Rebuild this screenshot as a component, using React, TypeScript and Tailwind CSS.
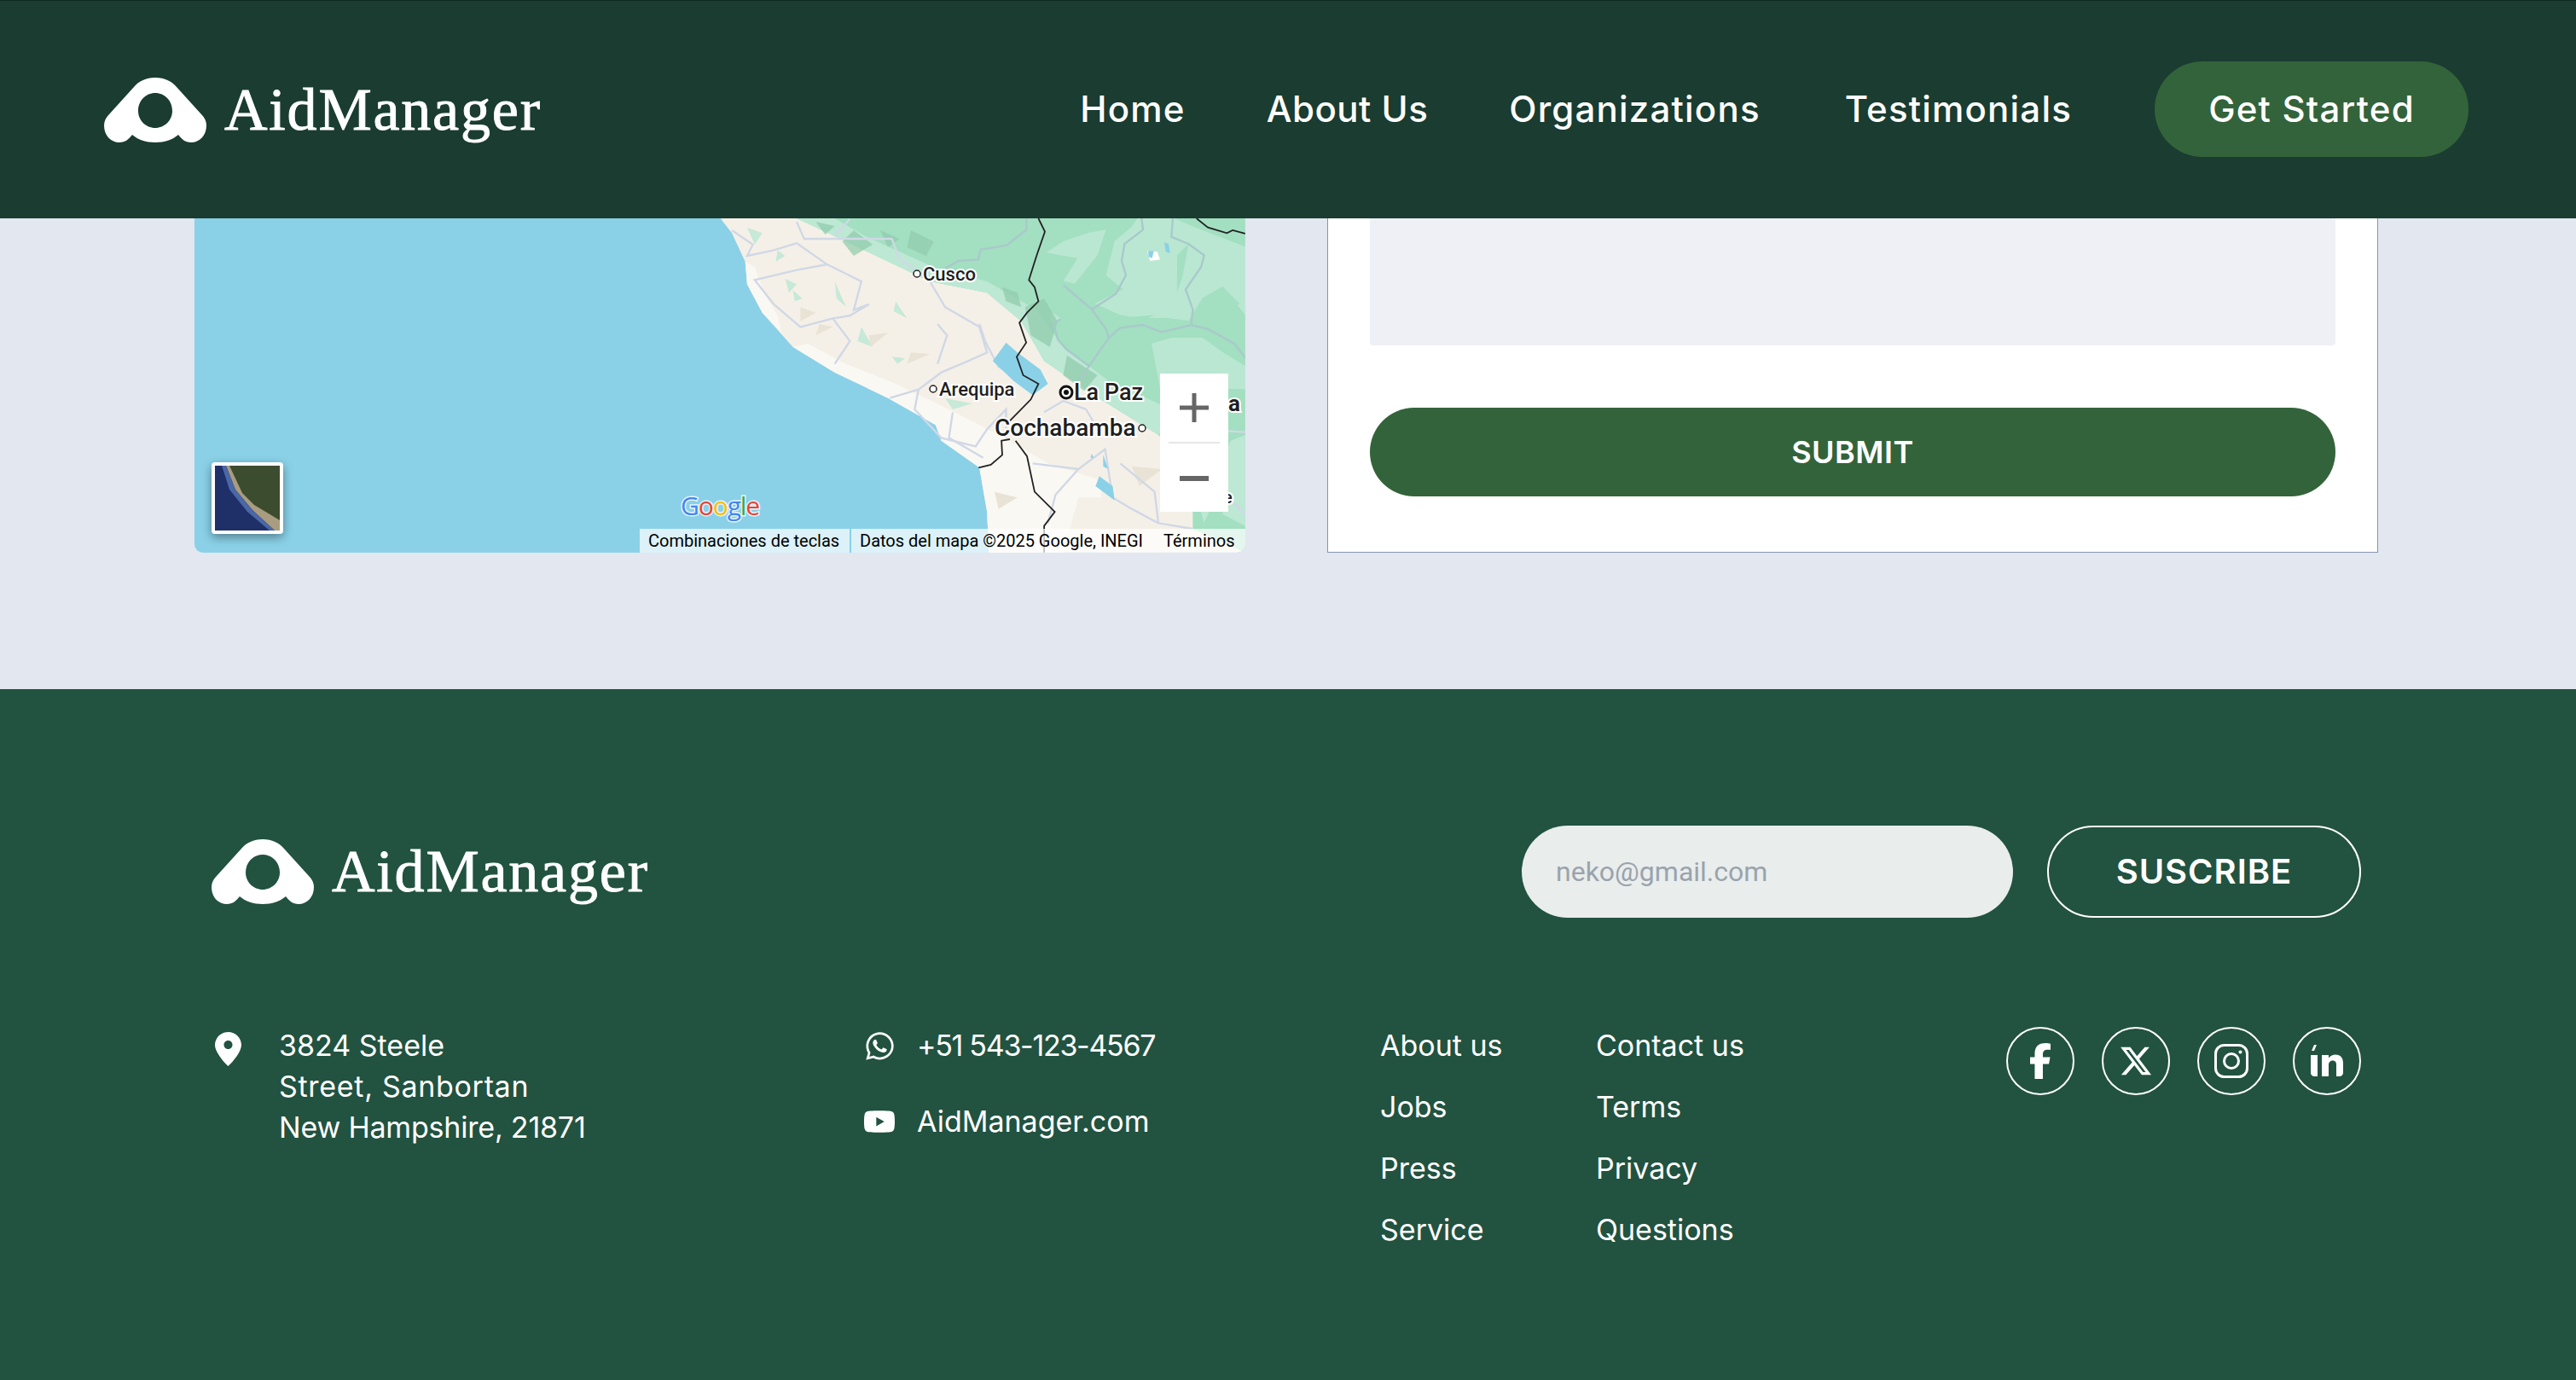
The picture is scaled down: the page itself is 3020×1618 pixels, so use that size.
import { FaFacebookF, FaWhatsapp, FaXTwitter, FaYoutube } from "react-icons/fa6";

// map shapes were traced from two zoomed crops, so two converters to page coordinates
const pts = (list: number[][]) =>
  list.map(([x, y]) => `${800 + x / 2.24},${250 + y / 3}`).join(" ");
const ne = (list: number[][]) =>
  list.map(([x, y]) => `${1100 + x / 3},${256 + y / 3}`).join(" ");

const LAND = [[100, 18], [130, 70], [165, 170], [170, 250], [210, 350], [290, 470], [400, 560], [540, 650], [665, 745], [680, 800], [780, 895], [800, 1050], [805, 1193], [1478, 1193], [1478, 18]];
const COAST_WHITE = [[290, 470], [400, 560], [540, 650], [665, 745], [680, 800], [780, 895], [800, 1050], [805, 1193], [1000, 1193], [1040, 1000], [1250, 1000], [1250, 1100], [1340, 1100], [1300, 980], [1100, 940], [960, 880], [860, 800], [700, 690], [560, 600], [430, 530], [330, 460]];
const COAST_NORTH = [[165, 170], [170, 250], [210, 350], [260, 420], [250, 360], [215, 280], [190, 190]];
const GREEN_BASE = [[300, 18], [430, 100], [650, 240], [800, 280], [890, 380], [950, 520], [1080, 640], [1250, 780], [1340, 900], [1340, 1110], [1478, 1193], [1478, 18]];
const GREEN_BAND = [[300, 18], [430, 100], [650, 240], [800, 280], [890, 380], [950, 520], [1080, 640], [1250, 780], [1300, 700], [1120, 590], [1000, 470], [930, 340], [800, 240], [660, 190], [480, 80], [400, 18]];
const BEIGE_SOUTH = [[1340, 900], [1340, 1110], [1250, 1193], [1100, 1193], [1100, 900], [1250, 790]];
const NE_LIGHT = [
  [[590, 200], [620, 80], [680, 30], [700, 0], [830, 0], [900, 30], [1080, 100], [1080, 340], [1000, 240], [930, 280], [880, 360], [800, 350], [700, 350], [640, 340], [550, 300], [650, 250]],
  [[380, 120], [440, 80], [530, 50], [590, 40], [560, 130], [480, 230], [440, 220], [490, 140], [430, 130]],
  [[750, 440], [820, 420], [930, 420], [1000, 470], [1080, 520], [1080, 600], [780, 600]],
  [[400, 330], [430, 350], [410, 370], [390, 360]],
];
const NE_DARK = [
  [[940, 280], [1000, 240], [1060, 300], [1000, 340]],
  [[840, 130], [880, 90], [860, 200], [840, 260]],
  [[640, 350], [760, 340], [700, 370]],
];
const SOUTH_GREEN = [
  [[1440, 800], [1478, 780], [1478, 1100], [1420, 1060], [1400, 930]],
  [[1340, 950], [1400, 1000], [1370, 1090]],
];
const SHADES = [
  [[900, 330], [950, 300], [985, 380], [965, 470], [915, 430]],
  [[1010, 500], [1090, 570], [1055, 625], [1000, 570]],
  [[600, 60], [660, 100], [640, 150], [590, 120]],
  [[450, 60], [500, 110], [450, 150], [420, 100]],
  [[840, 260], [880, 280], [890, 330], [850, 310]],
  [[520, 60], [570, 90], [540, 120]],
  [[350, 30], [400, 45], [375, 75]],
];
const SPECKS = [
  [[270, 230], [300, 250], [280, 280]],
  [[400, 240], [430, 330], [405, 300]],
  [[560, 310], [590, 370], [555, 345]],
  [[470, 400], [500, 470], [460, 450]],
  [[550, 505], [585, 510], [565, 530]],
  [[690, 650], [760, 670], [710, 690]],
  [[290, 270], [315, 300], [295, 310]],
  [[170, 50], [210, 70], [190, 110]],
  [[250, 130], [270, 150], [245, 170]],
];
const TAN = [
  [[360, 390], [395, 400], [350, 430]],
  [[600, 490], [650, 495], [590, 530]],
  [[490, 430], [540, 420], [495, 470]],
  [[310, 330], [350, 350], [310, 380]],
  [[820, 980], [880, 1000], [830, 1040]],
  [[1180, 890], [1260, 900], [1200, 960]],
];
const ROADS = [
  [[130, 60], [185, 110], [170, 150], [240, 130], [300, 105], [380, 180], [300, 200], [190, 235], [240, 320], [310, 400], [395, 370], [440, 450], [400, 530]],
  [[380, 180], [470, 240], [450, 340], [490, 320], [440, 360], [395, 370]],
  [[300, 30], [320, 90], [430, 90], [550, 90], [570, 160], [650, 240], [690, 330], [780, 400], [800, 490], [750, 520], [680, 560], [620, 620], [545, 650]],
  [[670, 390], [695, 430], [670, 530]],
  [[780, 390], [795, 450], [830, 540], [910, 600]],
  [[620, 620], [610, 690], [680, 790], [770, 820], [800, 760], [850, 690], [850, 790]],
  [[710, 700], [700, 790], [790, 860]],
  [[920, 880], [1040, 900], [1110, 830], [1130, 1000], [1180, 1040], [1250, 1090]],
  [[1040, 900], [980, 990], [960, 1090]],
  [[1150, 880], [1240, 980], [1250, 1090], [1340, 1110]],
  [[950, 700], [1000, 660], [1060, 690], [1100, 780]],
  [[1350, 760], [1478, 770]],
  [[1400, 950], [1478, 1060]],
  [[400, 80], [440, 20]],
];
const NE_ROADS = [
  [[310, 0], [310, 40], [240, 95], [150, 110], [140, 145], [70, 150], [0, 190]],
  [[715, 0], [720, 40], [655, 90], [645, 150], [660, 200], [625, 265], [540, 320], [440, 235]],
  [[540, 320], [590, 390], [600, 420], [530, 520], [500, 570]],
  [[600, 420], [640, 385], [720, 375], [785, 400], [890, 375], [950, 390], [1040, 440], [1080, 490]],
  [[825, 0], [820, 65], [880, 90], [935, 130], [925, 170], [870, 250], [895, 320], [890, 375]],
  [[430, 355], [405, 370], [420, 425], [450, 460], [530, 520]],
];
const BORDERS = [
  [[935, 18], [952, 65], [930, 150], [910, 235], [925, 260], [935, 310], [905, 350], [885, 385], [903, 455], [878, 505], [895, 570], [935, 600], [915, 655], [860, 730]],
  [[860, 795], [838, 800], [840, 850], [810, 885], [778, 895]],
  [[875, 800], [905, 855], [925, 980], [978, 1050], [950, 1100], [950, 1193]],
  [[1350, 18], [1380, 50], [1430, 70], [1445, 60], [1478, 72]],
];
const LAKES = [
  [[850, 455], [815, 520], [870, 590], [920, 640], [960, 600], [940, 550], [880, 490]],
  [[1095, 925], [1130, 960], [1135, 1010], [1085, 960]],
  [[1105, 850], [1118, 900], [1105, 890]],
  [[1075, 845], [1080, 860], [1072, 860]],
];

const FOOTER_LINKS = [
  ["About us", "Contact us"],
  ["Jobs", "Terms"],
  ["Press", "Privacy"],
  ["Service", "Questions"],
];

function LogoMark() {
  return (
    <svg className="h-[76px] w-[120px] shrink-0" viewBox="0 0 120 76">
      <path
        fill="#fff"
        fillRule="evenodd"
        d="M60 0C71 0 79 4 85 11L114 43C118 47 120 51 120 56C120 68 112 76 102 76C95 76 91 72 87 67C80 73 71 76 60 76C49 76 40 73 33 67C29 72 25 76 18 76C8 76 0 68 0 56C0 51 2 47 6 43L35 11C41 4 49 0 60 0ZM60 18C49 18 40 27 40 39C40 50 49 59 60 59C71 59 80 50 80 39C80 27 71 18 60 18Z"
      />
    </svg>
  );
}

function Logo() {
  return (
    <div className="flex items-center gap-[21px]">
      <LogoMark />
      <span className="font-['Liberation_Serif',serif] text-[70px] leading-[76px] tracking-[1.8px] text-white [-webkit-text-stroke:0.9px_white]">
        AidManager
      </span>
    </div>
  );
}

function MapLabel({ x, y, size, weight = 500, children }: { x: number; y: number; size: number; weight?: number; children: string }) {
  return (
    <text
      x={x}
      y={y}
      fontFamily="Roboto, sans-serif"
      fontSize={size}
      fontWeight={weight}
      fill="#1f1f1f"
      stroke="#fff"
      strokeWidth={4}
      paintOrder="stroke"
    >
      {children}
    </text>
  );
}

function MapDot({ x, y, big }: { x: number; y: number; big?: boolean }) {
  return big ? (
    <g>
      <circle cx={x} cy={y} r={7} fill="#fff" stroke="#111" strokeWidth={3} />
      <circle cx={x} cy={y} r={3} fill="#111" />
    </g>
  ) : (
    <circle cx={x} cy={y} r={4} fill="#fff" stroke="#222" strokeWidth={1.5} />
  );
}

function MapPanel() {
  return (
    <div className="relative h-[392px] w-[1232px] shrink-0 overflow-hidden rounded-b-[10px] bg-[#8ad1e8]">
      <svg className="block h-full w-full" viewBox="228 256 1232 392">
        <polygon points={pts(LAND)} fill="#f5f0e7" />
        <polygon points={pts(COAST_WHITE)} fill="#faf8f3" />
        <polygon points={pts(COAST_NORTH)} fill="#faf8f3" />
        <polygon points={pts(GREEN_BASE)} fill="#a3dfc1" />
        <polygon points={pts(BEIGE_SOUTH)} fill="#f5f0e7" />
        {SOUTH_GREEN.map((p, i) => (
          <polygon key={i} points={pts(p)} fill="#bde8d4" />
        ))}
        <polygon points={pts(GREEN_BAND)} fill="#bde8d4" />
        {NE_LIGHT.map((p, i) => (
          <polygon key={i} points={ne(p)} fill="#bfe9d6" fillOpacity={0.8} />
        ))}
        {NE_DARK.map((p, i) => (
          <polygon key={i} points={ne(p)} fill="#a3dfc1" />
        ))}
        {SHADES.map((p, i) => (
          <polygon key={i} points={pts(p)} fill="#8fcbab" fillOpacity={0.7} />
        ))}
        {SPECKS.map((p, i) => (
          <polygon key={i} points={pts(p)} fill="#c6e9d8" />
        ))}
        {TAN.map((p, i) => (
          <polygon key={i} points={pts(p)} fill="#e9e3d6" />
        ))}
        <polygon points={ne([[735, 115], [770, 118], [780, 145], [745, 150]])} fill="#fff" />
        <polygon points={ne([[738, 115], [758, 115], [752, 140], [740, 135]])} fill="#8ad1e8" />
        <polygon points={ne([[795, 85], [810, 90], [815, 122], [800, 118]])} fill="#8ad1e8" />
        {ROADS.map((p, i) => (
          <polyline key={i} points={pts(p)} fill="none" stroke="#d0d8e6" strokeWidth={2.4} />
        ))}
        {NE_ROADS.map((p, i) => (
          <polyline key={i} points={ne(p)} fill="none" stroke="#a9c9cb" strokeWidth={2.4} />
        ))}
        {LAKES.map((p, i) => (
          <polygon key={i} points={pts(p)} fill="#8ad1e8" />
        ))}
        {BORDERS.map((p, i) => (
          <polyline key={i} points={pts(p)} fill="none" stroke="#222" strokeWidth={1.8} />
        ))}

        <MapDot x={1075} y={321} />
        <MapLabel x={1082} y={329} size={22}>Cusco</MapLabel>
        <MapDot x={1094} y={456} />
        <MapLabel x={1101} y={464} size={22}>Arequipa</MapLabel>
        <MapDot x={1250} y={460} big />
        <MapLabel x={1259} y={469} size={27}>La Paz</MapLabel>
        <MapLabel x={1166} y={511} size={28}>Cochabamba</MapLabel>
        <MapDot x={1339} y={502} />
        <MapLabel x={1440} y={482} size={26} weight={700}>a</MapLabel>
        <MapLabel x={1434} y={590} size={20}>e</MapLabel>

        <text x={798} y={604} fontFamily="'Open Sans', sans-serif" fontSize={30} fontWeight={500} stroke="#e8f4f8" strokeWidth={3} paintOrder="stroke" letterSpacing={-1.1}>
          <tspan fill="#4285f4">G</tspan>
          <tspan fill="#ea4335">o</tspan>
          <tspan fill="#fbbc05">o</tspan>
          <tspan fill="#4285f4">g</tspan>
          <tspan fill="#34a853">l</tspan>
          <tspan fill="#ea4335">e</tspan>
        </text>
      </svg>

      {/* zoom control */}
      <div className="absolute right-[20px] top-[182px] flex h-[162px] w-[80px] flex-col items-center bg-white">
        <svg className="mt-[23px] h-[34px] w-[34px]" viewBox="0 0 34 34">
          <path d="M0 17H34M17 0V34" stroke="#666" strokeWidth={5} />
        </svg>
        <div className="mt-[23px] h-[2px] w-[60px] bg-[#e6e6e6]" />
        <svg className="mt-[38px] h-[6px] w-[34px]" viewBox="0 0 34 6">
          <path d="M0 3H34" stroke="#666" strokeWidth={6} />
        </svg>
      </div>

      {/* satellite thumbnail */}
      <div className="absolute left-[20px] top-[286px] h-[84px] w-[84px] overflow-hidden rounded-[4px] border-4 border-white shadow-[0_4px_12px_rgba(0,0,0,0.4)]">
        <svg className="block h-full w-full" viewBox="0 0 76 76">
          <rect width="76" height="76" fill="#1f2f68" />
          <polygon points="14,0 76,0 76,76 70,76 44,52 24,28" fill="#3c4c2e" />
          <polygon points="13,0 17,0 32,32 46,46 76,64 76,76 70,76 44,52 24,28" fill="#a99c80" />
          <polygon points="8,0 13,0 24,28 44,52 70,76 64,76 38,54 17,28" fill="#4a67a6" />
        </svg>
      </div>

      {/* attribution */}
      <div className="absolute bottom-0 right-0 flex h-[28px] w-[710px] items-center whitespace-nowrap bg-white/70 font-['Roboto',sans-serif] text-[20px] leading-[28px] text-black">
        <span className="w-[246px] pl-[10px]">Combinaciones de teclas</span>
        <span className="h-full w-[2px] bg-[#8ad1e8]" />
        <span className="ml-[10px] w-[356px]">Datos del mapa ©2025 Google, INEGI</span>
        <span>Términos</span>
      </div>
    </div>
  );
}

function ContactForm() {
  return (
    <div className="h-[392px] w-[1232px] shrink-0 border-x border-b border-[#8694ad] bg-white px-[49px]">
      <textarea className="block h-[149px] w-full resize-none rounded-b-[4px] bg-[#eef0f5] outline-none" />
      <button
        type="button"
        className="mt-[73px] block h-[104px] w-full rounded-[52px] bg-[#33633a] text-[36px] font-semibold tracking-[0.5px] text-white"
      >
        SUBMIT
      </button>
    </div>
  );
}

function LinkedInGlyph() {
  return (
    <svg className="h-[38px] w-[40px]" viewBox="0 0 40 38" fill="#fff">
      <path d="M5 0L8 0L5 7L2 7Z" />
      <path d="M1 12H9V37H5C3 37 1 35 1 33Z" />
      <path d="M14 12H22V15.5C24 13 27 11.5 30 11.5C36 11.5 39 15.5 39 22V33C39 35 37 37 35 37H31V23C31 20 29.5 18.5 27 18.5C24 18.5 22 20.5 22 23.5V37H14Z" />
    </svg>
  );
}

function InstagramGlyph() {
  return (
    <svg className="h-[40px] w-[40px]" viewBox="0 0 40 40" fill="none" stroke="#fff" strokeWidth={3}>
      <rect x="1.5" y="1.5" width="37" height="37" rx="10" />
      <circle cx="20" cy="20" r="8.5" />
      <circle cx="30.5" cy="9.5" r="2" fill="#fff" stroke="none" />
    </svg>
  );
}

function SocialCircle({ children }: { children: React.ReactNode }) {
  return (
    <a className="flex h-[80px] w-[80px] items-center justify-center rounded-full border-2 border-white text-white">
      {children}
    </a>
  );
}

export default function App() {
  return (
    <div className="min-h-[1618px] w-[3020px] bg-[#e2e7f0] font-['Inter',sans-serif]">
      <header className="flex h-[256px] items-center justify-between border-t border-t-[#0c2a20] bg-[#1a3c31] pl-[122px] pr-[126px]">
        <Logo />
        <nav className="flex -translate-y-px items-center text-[42px] font-medium tracking-[1.2px] text-white">
          <a>Home</a>
          <a className="ml-[95px] tracking-[0.5px]">About Us</a>
          <a className="ml-[95px]">Organizations</a>
          <a className="ml-[99px]">Testimonials</a>
          <a className="ml-[97px] flex h-[112px] w-[368px] items-center justify-center rounded-[56px] bg-[#33633a]">
            Get Started
          </a>
        </nav>
      </header>

      <section className="flex h-[552px] gap-[96px] pl-[228px]">
        <MapPanel />
        <ContactForm />
      </section>

      <footer className="h-[810px] bg-[#225240] pl-[248px] pr-[252px] pt-[160px] text-[34px] leading-[48px] text-white">
        <div className="flex h-[108px] items-center justify-between">
          <Logo />
          <form className="flex items-center gap-[40px]">
            <input
              className="h-[108px] w-[576px] rounded-[54px] bg-[#e9edec] px-[40px] font-['Roboto',sans-serif] text-[32px] outline-none placeholder:text-[#9aa3ad]"
              placeholder="neko@gmail.com"
              type="email"
            />
            <button
              type="button"
              className="h-[108px] w-[368px] rounded-[54px] border-2 border-white text-[40px] font-semibold tracking-[1px] text-white"
            >
              SUSCRIBE
            </button>
          </form>
        </div>

        <div className="mt-[128px] grid grid-cols-[764px_606px_1fr_auto]">
          <div className="-mt-[2px] flex gap-[44px] pl-[4px]">
            <svg className="mt-[8px] h-[40px] w-[31px] shrink-0" viewBox="0 0 31 40">
              <path
                fill="#fff"
                fillRule="evenodd"
                d="M15.5 0C24 0 31 6.8 31 15.2C31 23 21 35 15.5 40C10 35 0 23 0 15.2C0 6.8 7 0 15.5 0ZM15.5 10C12.5 10 10.5 12.2 10.5 15C10.5 17.8 12.5 20 15.5 20C18.5 20 20.5 17.8 20.5 15C20.5 12.2 18.5 10 15.5 10Z"
              />
            </svg>
            <p>
              3824 Steele
              <br />
              <span className="tracking-[0.7px]">Street, Sanbortan</span>
              <br />
              <span className="tracking-[-0.2px]">New Hampshire, 21871</span>
            </p>
          </div>

          <div className="-mt-[2px] flex flex-col gap-[41px]">
            <div className="flex items-center gap-[25px]">
              <span className="flex w-[38px] justify-center">
                <FaWhatsapp size={37} />
              </span>
              <span className="tracking-[-1.3px]">+51 543-123-4567</span>
            </div>
            <div className="flex items-center gap-[25px]">
              <span className="flex w-[38px] justify-center">
                <FaYoutube size={38} />
              </span>
              <span>AidManager.com</span>
            </div>
          </div>

          <div className="-mt-[2px] grid grid-cols-[253px_1fr] content-start gap-y-[24px]">
            {FOOTER_LINKS.flat().map((label) => (
              <a key={label}>{label}</a>
            ))}
          </div>

          <div className="flex gap-[32px]">
            <SocialCircle>
              <FaFacebookF size={42} />
            </SocialCircle>
            <SocialCircle>
              <FaXTwitter size={40} />
            </SocialCircle>
            <SocialCircle>
              <InstagramGlyph />
            </SocialCircle>
            <SocialCircle>
              <LinkedInGlyph />
            </SocialCircle>
          </div>
        </div>
      </footer>
    </div>
  );
}
